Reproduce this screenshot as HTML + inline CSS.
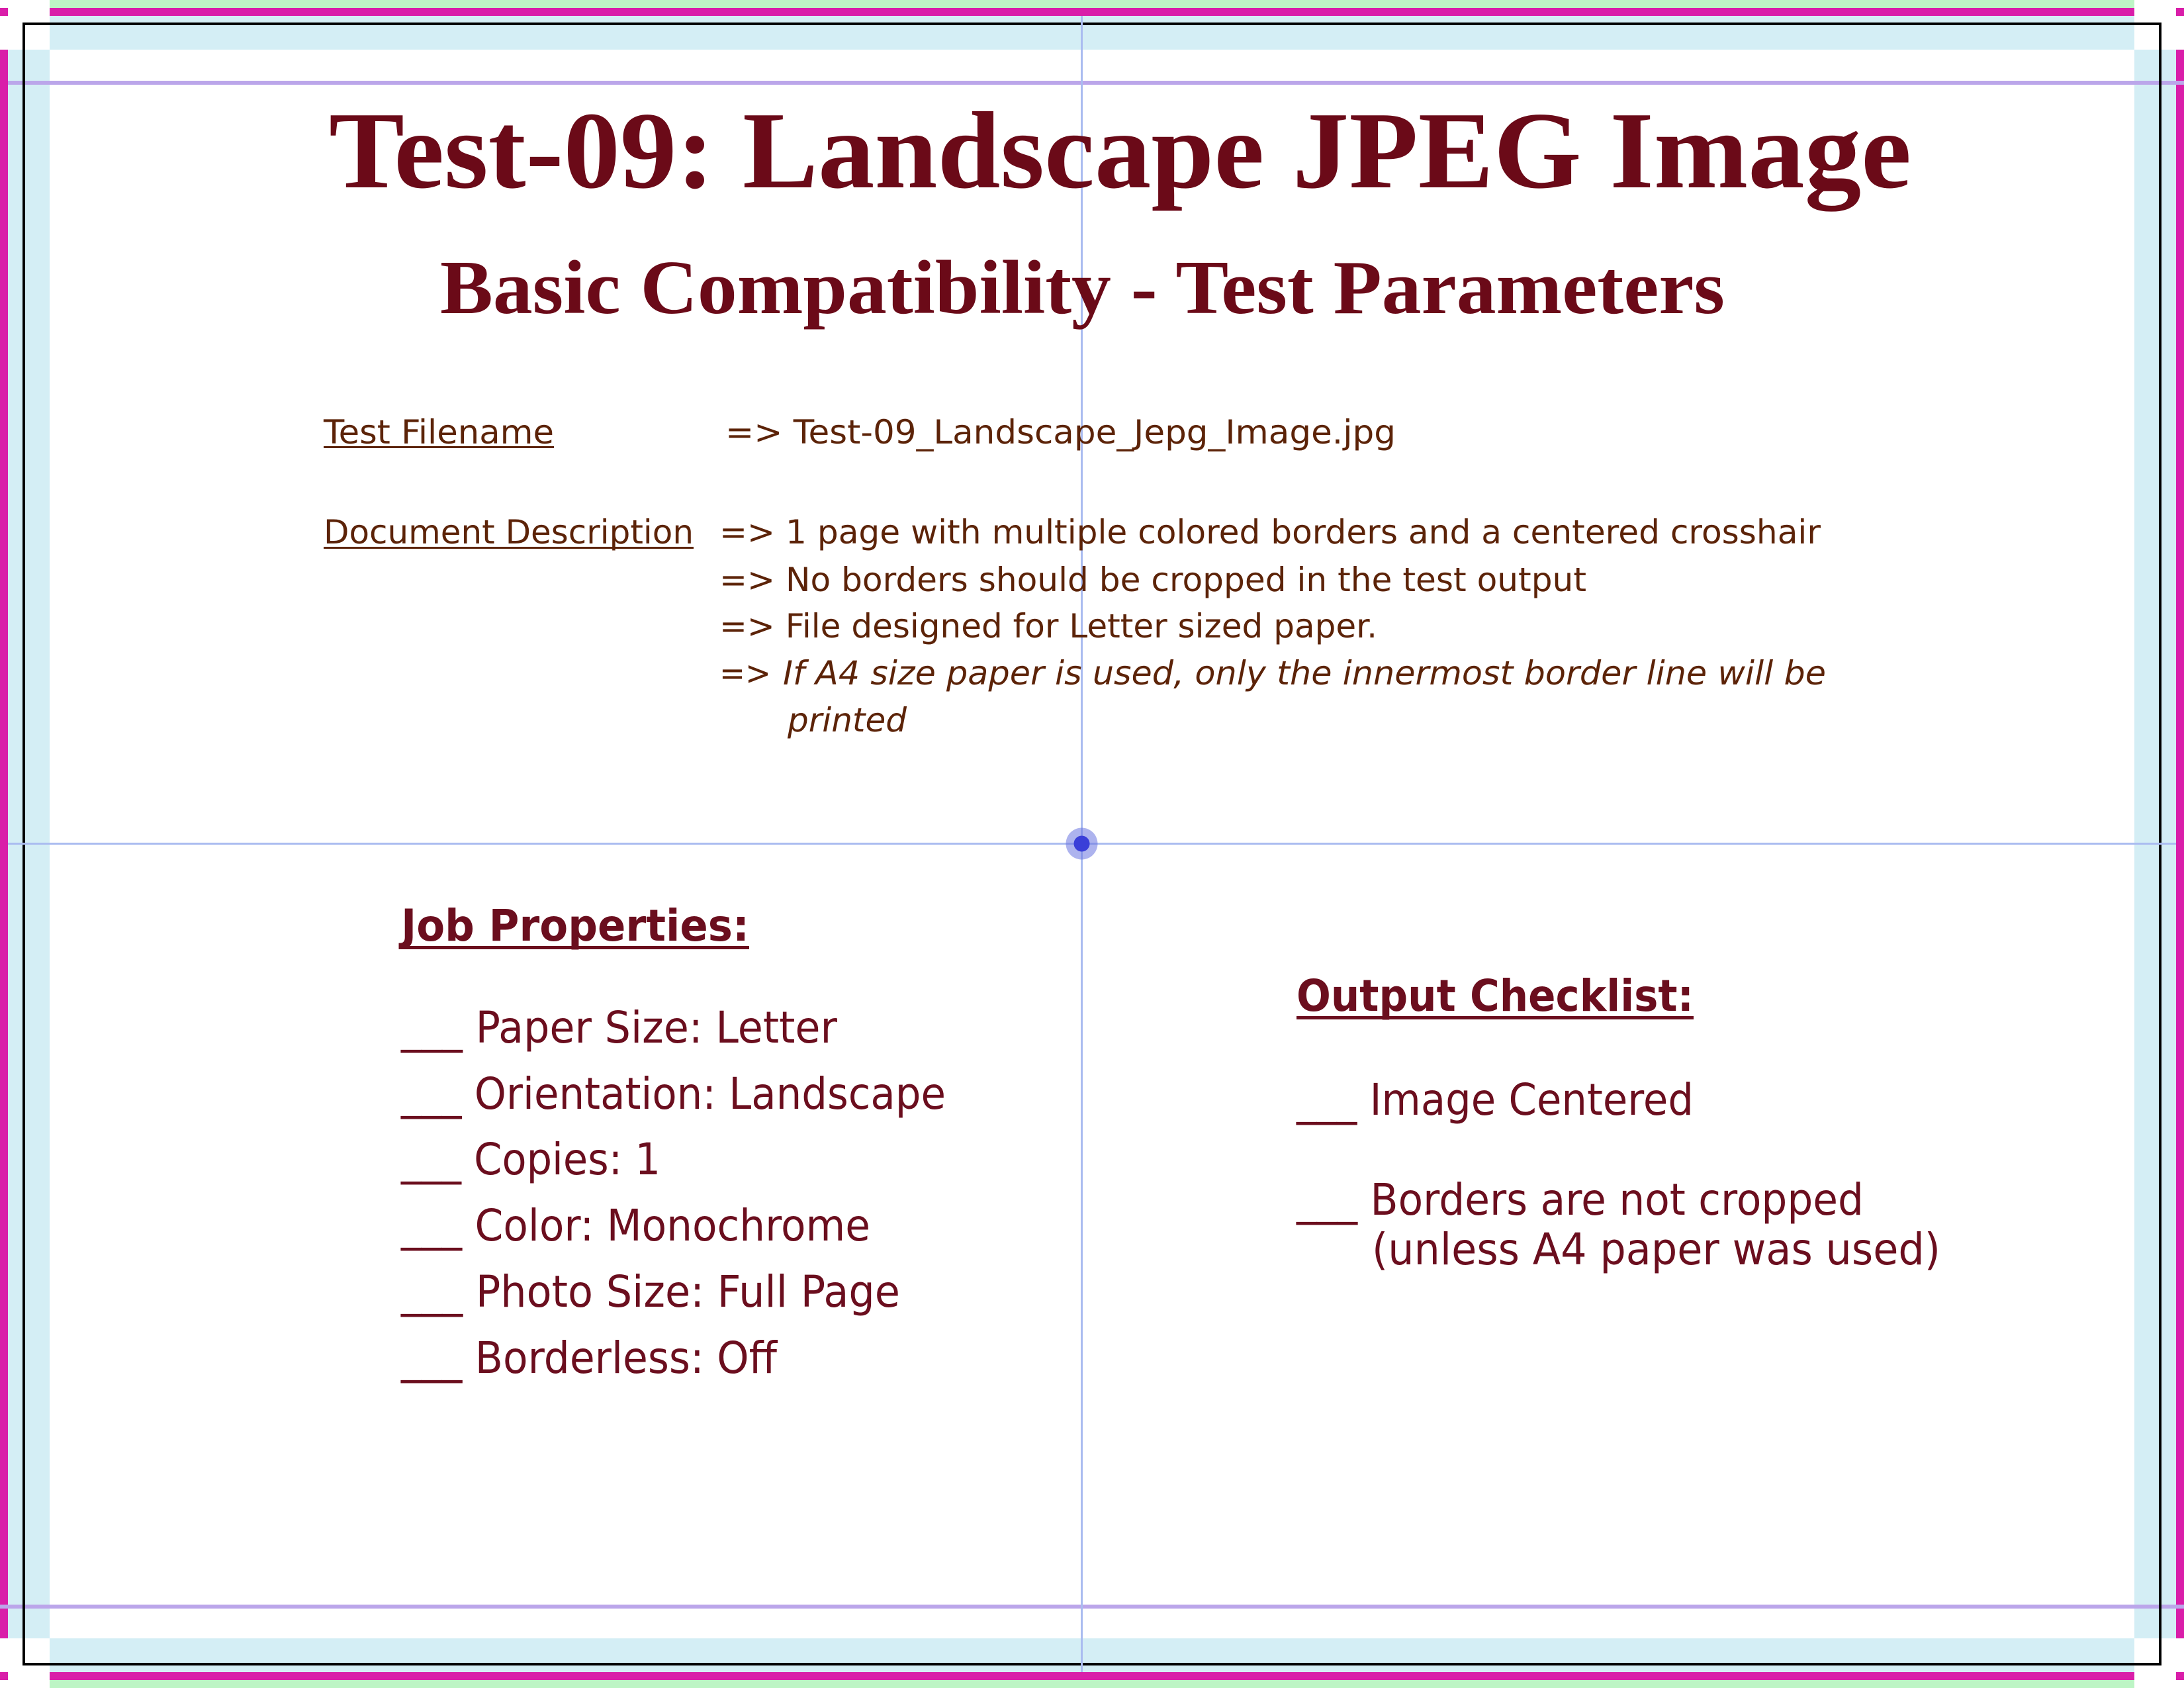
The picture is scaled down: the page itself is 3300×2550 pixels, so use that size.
<!DOCTYPE html>
<html><head><meta charset="utf-8"><style>html,body{margin:0;padding:0;background:#fff}svg{display:block}</style></head>
<body>
<svg xmlns="http://www.w3.org/2000/svg" width="3300" height="2550" viewBox="0 0 3300 2550">
<rect width="3300" height="2550" fill="#fff"/>
<!-- light blue bands -->
<rect x="75" y="24" width="3150" height="51" fill="#d4eef5"/>
<rect x="75" y="2475" width="3150" height="51" fill="#d4eef5"/>
<rect x="12" y="75" width="63" height="2400" fill="#d4eef5"/>
<rect x="3225" y="75" width="63" height="2400" fill="#d4eef5"/>
<!-- green -->
<rect x="75" y="0" width="3150" height="12" fill="#bdf5c5"/>
<rect x="75" y="2538" width="3150" height="12" fill="#bdf5c5"/>
<!-- magenta -->
<rect x="75" y="12" width="3150" height="12" fill="#d91ea9"/>
<rect x="75" y="2526" width="3150" height="12" fill="#d91ea9"/>
<rect x="0" y="75" width="12" height="2400" fill="#d91ea9"/>
<rect x="3288" y="75" width="12" height="2400" fill="#d91ea9"/>
<rect x="0" y="12" width="12" height="12" fill="#d91ea9"/>
<rect x="3288" y="12" width="12" height="12" fill="#d91ea9"/>
<rect x="0" y="2526" width="12" height="12" fill="#d91ea9"/>
<rect x="3288" y="2526" width="12" height="12" fill="#d91ea9"/>
<!-- purple lines -->
<rect x="12" y="122" width="3288" height="6" fill="#bba6ea"/>
<rect x="0" y="2424" width="3300" height="6" fill="#bba6ea"/>
<!-- black rect -->
<rect x="36" y="36" width="3228" height="2478" fill="none" stroke="#000" stroke-width="4"/>
<!-- crosshair -->
<rect x="1633" y="24" width="3" height="2502" fill="#aabcf0"/>
<rect x="12" y="1273" width="3276" height="3" fill="#aabcf0"/>
<circle cx="1634.5" cy="1274.5" r="24" fill="#6a74e0" fill-opacity="0.55"/>
<circle cx="1634.5" cy="1274.5" r="12" fill="#3a3fd8"/>

<g font-family="'Liberation Serif', serif" font-weight="bold" fill="#6b0a18">
<text x="497" y="283" font-size="166" textLength="2391" lengthAdjust="spacingAndGlyphs">Test-09: Landscape JPEG Image</text>
<text x="665" y="473" font-size="116" textLength="1941" lengthAdjust="spacingAndGlyphs">Basic Compatibility - Test Parameters</text>
</g>

<g font-family="'DejaVu Sans', sans-serif" font-size="50" fill="#5c2308">
<text x="489" y="670" textLength="348" lengthAdjust="spacingAndGlyphs">Test Filename</text>
<rect x="489" y="674" width="348" height="3"/>
<text x="1096" y="670" textLength="1013" lengthAdjust="spacingAndGlyphs">=&gt; Test-09_Landscape_Jepg_Image.jpg</text>
<text x="489" y="821" textLength="559" lengthAdjust="spacingAndGlyphs">Document Description</text>
<rect x="489" y="826" width="559" height="3"/>
<text x="1087" y="821" textLength="1664" lengthAdjust="spacingAndGlyphs">=&gt; 1 page with multiple colored borders and a centered crosshair</text>
<text x="1087" y="893" textLength="1310" lengthAdjust="spacingAndGlyphs">=&gt; No borders should be cropped in the test output</text>
<text x="1087" y="963" textLength="994" lengthAdjust="spacingAndGlyphs">=&gt; File designed for Letter sized paper.</text>
<text x="1087" y="1034" textLength="78" lengthAdjust="spacingAndGlyphs">=&gt;</text>
<text x="1183" y="1034" font-style="italic" textLength="1576" lengthAdjust="spacingAndGlyphs">If A4 size paper is used, only the innermost border line will be</text>
<text x="1190" y="1105" font-style="italic" textLength="180" lengthAdjust="spacingAndGlyphs">printed</text>
</g>

<g font-family="'DejaVu Sans', sans-serif" fill="#6b0e1e">
<text x="606" y="1421" font-size="66" font-weight="bold" textLength="526" lengthAdjust="spacingAndGlyphs">Job Properties:</text>
<rect x="606" y="1429" width="526" height="5"/>
<g font-size="66">
<text x="606" y="1575" textLength="659" lengthAdjust="spacingAndGlyphs">___ Paper Size: Letter</text>
<text x="606" y="1675" textLength="823" lengthAdjust="spacingAndGlyphs">___ Orientation: Landscape</text>
<text x="606" y="1774" textLength="392" lengthAdjust="spacingAndGlyphs">___ Copies: 1</text>
<text x="606" y="1874" textLength="709" lengthAdjust="spacingAndGlyphs">___ Color: Monochrome</text>
<text x="606" y="1974" textLength="754" lengthAdjust="spacingAndGlyphs">___ Photo Size: Full Page</text>
<text x="606" y="2074" textLength="568" lengthAdjust="spacingAndGlyphs">___ Borderless: Off</text>
</g>
<text x="1959" y="1527" font-size="66" font-weight="bold" textLength="600" lengthAdjust="spacingAndGlyphs">Output Checklist:</text>
<rect x="1959" y="1535" width="600" height="5"/>
<g font-size="66">
<text x="1959" y="1684" textLength="600" lengthAdjust="spacingAndGlyphs">___ Image Centered</text>
<text x="1959" y="1835" textLength="857" lengthAdjust="spacingAndGlyphs">___ Borders are not cropped</text>
<text x="2073" y="1910" textLength="859" lengthAdjust="spacingAndGlyphs">(unless A4 paper was used)</text>
</g>
</g>
</svg>
</body></html>
